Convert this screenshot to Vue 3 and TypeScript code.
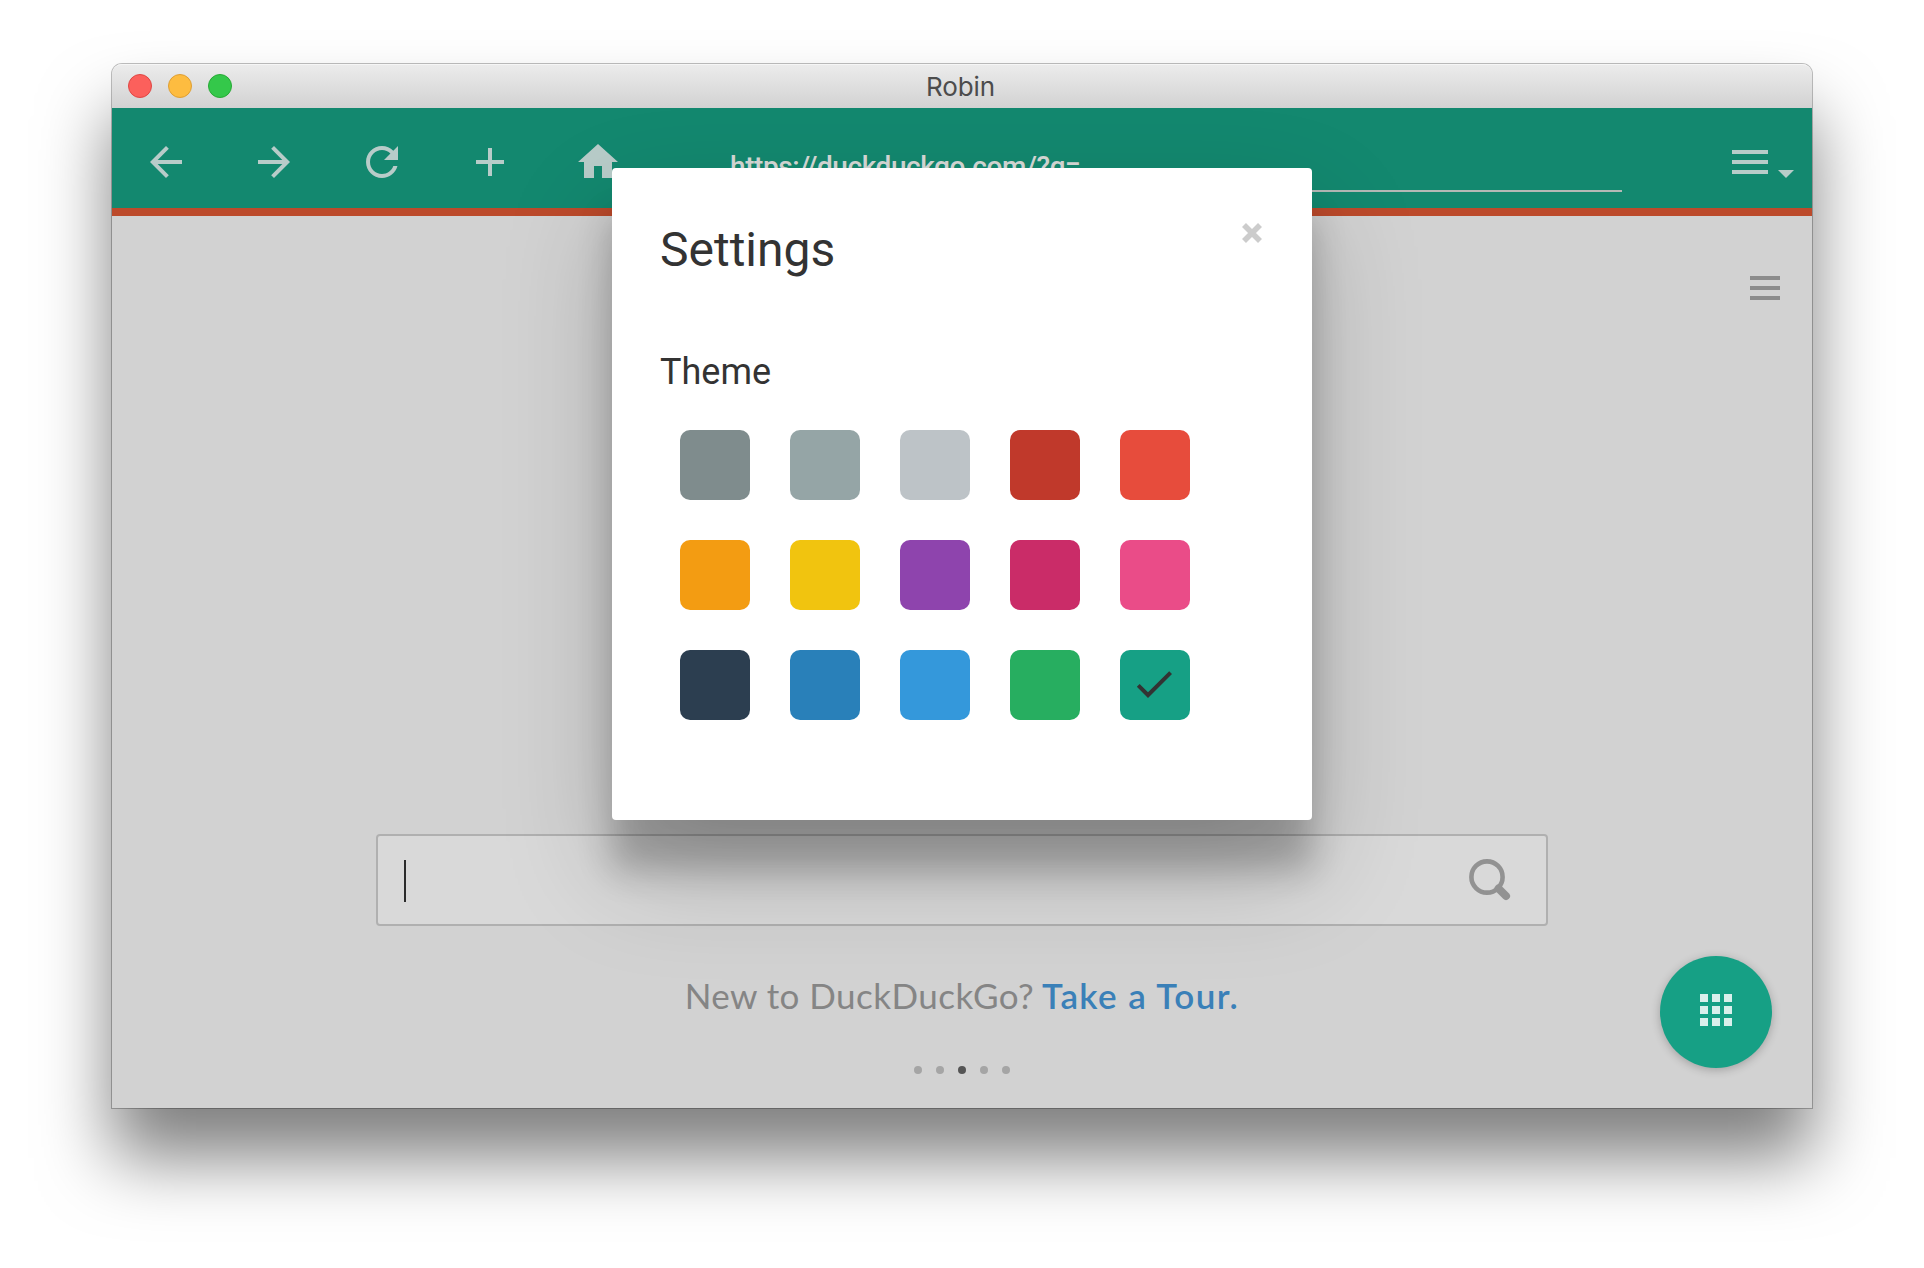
<script setup lang="ts">
import { ref } from 'vue'

interface NavAction {
  label: string
  path: string
}

const actions: NavAction[] = [
  { label: 'Back', path: 'M20 11H7.83l5.59-5.59L12 4l-8 8 8 8 1.41-1.41L7.83 13H20v-2z' },
  { label: 'Forward', path: 'M12 4l-1.41 1.41L16.17 11H4v2h12.17l-5.58 5.59L12 20l8-8z' },
  {
    label: 'Reload',
    path: 'M17.65 6.35C16.2 4.9 14.21 4 12 4c-4.42 0-7.99 3.58-7.99 8s3.57 8 7.99 8c3.73 0 6.84-2.55 7.73-6h-2.08c-.82 2.33-3.04 4-5.65 4-3.31 0-6-2.69-6-6s2.69-6 6-6c1.66 0 3.14.69 4.22 1.78L13 11h7V4l-2.35 2.35z',
  },
  { label: 'New tab', path: 'M19 13h-6v6h-2v-6H5v-2h6V5h2v6h6v2z' },
  { label: 'Home', path: 'M10 20v-6h4v6h5v-8h3L12 3 2 12h3v8z' },
]

const themes: string[] = [
  '#7f8c8d', '#95a5a6', '#bdc3c7', '#c0392b', '#e74c3c',
  '#f39c12', '#f1c40f', '#8e44ad', '#ca2c68', '#ea4c88',
  '#2c3e50', '#2980b9', '#3498db', '#27ae60', '#16a085',
]

const selected = ref('#16a085')
const address = ref('https://duckduckgo.com/?q=')
const slide = ref(3)
</script>

<template>
  <main class="desktop">
    <section class="window">
      <header class="titlebar">
        <div class="lights">
          <span class="light red"></span>
          <span class="light yellow"></span>
          <span class="light green"></span>
        </div>
        <span class="title">Robin</span>
      </header>

      <nav class="toolbar">
        <button v-for="a in actions" :key="a.label" class="nav-btn" :aria-label="a.label">
          <svg viewBox="0 0 24 24"><path :d="a.path" /></svg>
        </button>
        <div class="address">{{ address }}</div>
        <button class="menu-btn" aria-label="Menu">
          <svg class="bars" viewBox="0 0 24 24"><path d="M3 18h18v-2H3v2zm0-5h18v-2H3v2zm0-7v2h18V6H3z" /></svg>
          <svg class="caret" viewBox="0 0 16 8"><path d="M0 0h16L8 8z" /></svg>
        </button>
      </nav>

      <div class="page">
        <div class="page-menu"><i></i><i></i><i></i></div>
        <div class="search">
          <span class="cursor"></span>
          <svg class="lens" viewBox="0 0 42 42">
            <circle cx="18" cy="18" r="15.6" />
            <path d="M29.5 29.5L37 37" />
          </svg>
        </div>
        <p class="tour"><span class="tour-text">New to DuckDuckGo?</span><a class="tour-link">Take a Tour.</a></p>
        <div class="dots">
          <span v-for="n in 5" :key="n" class="dot" :class="{ active: n === slide }"></span>
        </div>
      </div>

      <button class="fab" aria-label="Apps">
        <svg viewBox="0 0 24 24"><path d="M4 8h4V4H4v4zm6 12h4v-4h-4v4zm-6 0h4v-4H4v4zm0-6h4v-4H4v4zm6 0h4v-4h-4v4zm6-10v4h4V4h-4zm-6 4h4V4h-4v4zm6 6h4v-4h-4v4zm0 6h4v-4h-4v4z" /></svg>
      </button>

      <div class="modal" role="dialog">
        <div class="modal-head">
          <h1>Settings</h1>
          <svg class="close" viewBox="0 0 20 20"><path d="M2 2L18 18M18 2L2 18" /></svg>
        </div>
        <h2>Theme</h2>
        <div class="swatches">
          <button
            v-for="c in themes"
            :key="c"
            class="swatch"
            :style="{ backgroundColor: c }"
            @click="selected = c"
          >
            <svg v-if="c === selected" viewBox="0 0 24 24"><path d="M9 16.17L4.83 12l-1.42 1.41L9 19 21 7l-1.41-1.41z" /></svg>
          </button>
        </div>
      </div>
    </section>
  </main>
</template>

<style>
html,
body {
  margin: 0;
  background: #fff;
  overflow: hidden;
}
</style>

<style scoped>
* {
  box-sizing: border-box;
}
button {
  border: 0;
  padding: 0;
  background: none;
  font: inherit;
}
svg {
  display: block;
}
.desktop {
  width: 1924px;
  height: 1268px;
  padding: 64px 112px 160px;
  overflow: hidden;
  font-family: Roboto, "Liberation Sans", sans-serif;
}
.window {
  position: relative;
  display: flex;
  flex-direction: column;
  height: 1044px;
  border-radius: 10px 10px 0 0;
  box-shadow: 0 0 0 1px rgba(0, 0, 0, 0.25), 0 50px 70px rgba(0, 0, 0, 0.5);
}
.titlebar {
  display: flex;
  align-items: center;
  height: 44px;
  padding: 0 16px;
  border-radius: 10px 10px 0 0;
  background: linear-gradient(#ececec, #d2d2d2);
  box-shadow: inset 0 2px 0 -1px #f6f6f6;
}
.lights {
  display: flex;
  gap: 16px;
  width: 104px;
}
.light {
  width: 24px;
  height: 24px;
  border-radius: 50%;
}
.red {
  background: #fc605c;
  border: 1px solid #df4744;
}
.yellow {
  background: #fdbc40;
  border: 1px solid #de9f34;
}
.green {
  background: #34c84a;
  border: 1px solid #27aa35;
}
.title {
  flex: 1;
  margin-right: 107px;
  padding-top: 2px;
  text-align: center;
  font-family: Inter, sans-serif;
  font-size: 26px;
  line-height: 42px;
  letter-spacing: -0.1px;
  color: #4c4c4c;
}
.toolbar {
  display: flex;
  align-items: center;
  height: 108px;
  background: #13886f;
  border-bottom: 8px solid #bc4a2b;
}
.nav-btn {
  width: 108px;
  padding: 8px 30px 0;
}
.nav-btn svg,
.bars {
  width: 48px;
  height: 48px;
  fill: #b8ccc9;
}
.address {
  width: 922px;
  height: 60px;
  margin: 8px 0 0 48px;
  padding-left: 30px;
  border-bottom: 2px solid #b4b9b6;
  font-size: 28px;
  font-weight: 500;
  letter-spacing: -0.43px;
  line-height: 69px;
  color: #d6d9d6;
}
.menu-btn {
  display: flex;
  align-items: flex-end;
  margin: 8px 18px 0 auto;
}
.caret {
  width: 16px;
  height: 8px;
  margin: 0 0 8px 4px;
  fill: #b8ccc9;
}
.page {
  flex: 1;
  display: flex;
  flex-direction: column;
  align-items: center;
  background: #d2d2d2;
}
.page-menu {
  display: flex;
  flex-direction: column;
  gap: 6px;
  align-self: flex-end;
  width: 30px;
  margin: 60px 32px 0 0;
}
.page-menu i {
  height: 4px;
  background: #8c8c8c;
}
.search {
  display: flex;
  align-items: center;
  justify-content: space-between;
  width: 1172px;
  height: 92px;
  margin-top: 534px;
  padding: 0 35px 0 26px;
  border: 2px solid #b0b0b0;
  border-radius: 4px;
  background: #d9d9d9;
}
.cursor {
  width: 2px;
  height: 42px;
  margin-top: 2px;
  background: #2b2b2b;
}
.lens {
  width: 42px;
  height: 42px;
  fill: none;
  stroke: #929292;
}
.lens circle {
  stroke-width: 4.6;
}
.lens path {
  stroke-width: 8;
  stroke-linecap: round;
}
.tour {
  display: flex;
  gap: 8px;
  margin: 47px 0 0;
  font-family: Lato, sans-serif;
  font-size: 35px;
  line-height: 44px;
  white-space: nowrap;
}
.tour-text {
  letter-spacing: 0.45px;
  color: #858585;
}
.tour-link {
  letter-spacing: 1.4px;
  color: #3a80b8;
  font-weight: 600;
}
.dots {
  display: flex;
  gap: 14px;
  margin-top: 49px;
}
.dot {
  width: 8px;
  height: 8px;
  border-radius: 50%;
  background: #a5a5a5;
}
.dot.active {
  background: #555;
}
.fab {
  position: absolute;
  right: 40px;
  bottom: 40px;
  width: 112px;
  height: 112px;
  padding: 30px 32px 34px;
  border-radius: 50%;
  background: #16a085;
  box-shadow: 0 2px 10px rgba(0, 0, 0, 0.24);
}
.fab svg {
  width: 48px;
  height: 48px;
  fill: #daf0ec;
}
.modal {
  position: absolute;
  left: 500px;
  top: 104px;
  width: 700px;
  height: 652px;
  padding: 48px;
  border-radius: 4px;
  background: #fff;
  color: #333;
  box-shadow: 0 50px 34px rgba(0, 0, 0, 0.22), 0 50px 110px rgba(0, 0, 0, 0.21);
}
.modal-head {
  display: flex;
  justify-content: space-between;
}
h1,
h2 {
  margin: 0;
  font-weight: 400;
}
h1 {
  font-size: 48px;
  line-height: 68px;
}
.close {
  width: 20px;
  height: 20px;
  margin: 7px 2px 0 0;
  stroke: #ccc;
  stroke-width: 5.6;
}
h2 {
  margin-top: 64px;
  font-size: 36px;
  line-height: 48px;
}
.swatches {
  display: grid;
  grid-template-columns: repeat(5, 70px);
  gap: 40px;
  margin: 34px 0 0 20px;
}
.swatch {
  display: flex;
  align-items: flex-start;
  width: 70px;
  height: 70px;
  padding: 10px;
  border-radius: 10px;
}
.swatch svg {
  width: 48px;
  height: 48px;
  fill: #333;
}
</style>
